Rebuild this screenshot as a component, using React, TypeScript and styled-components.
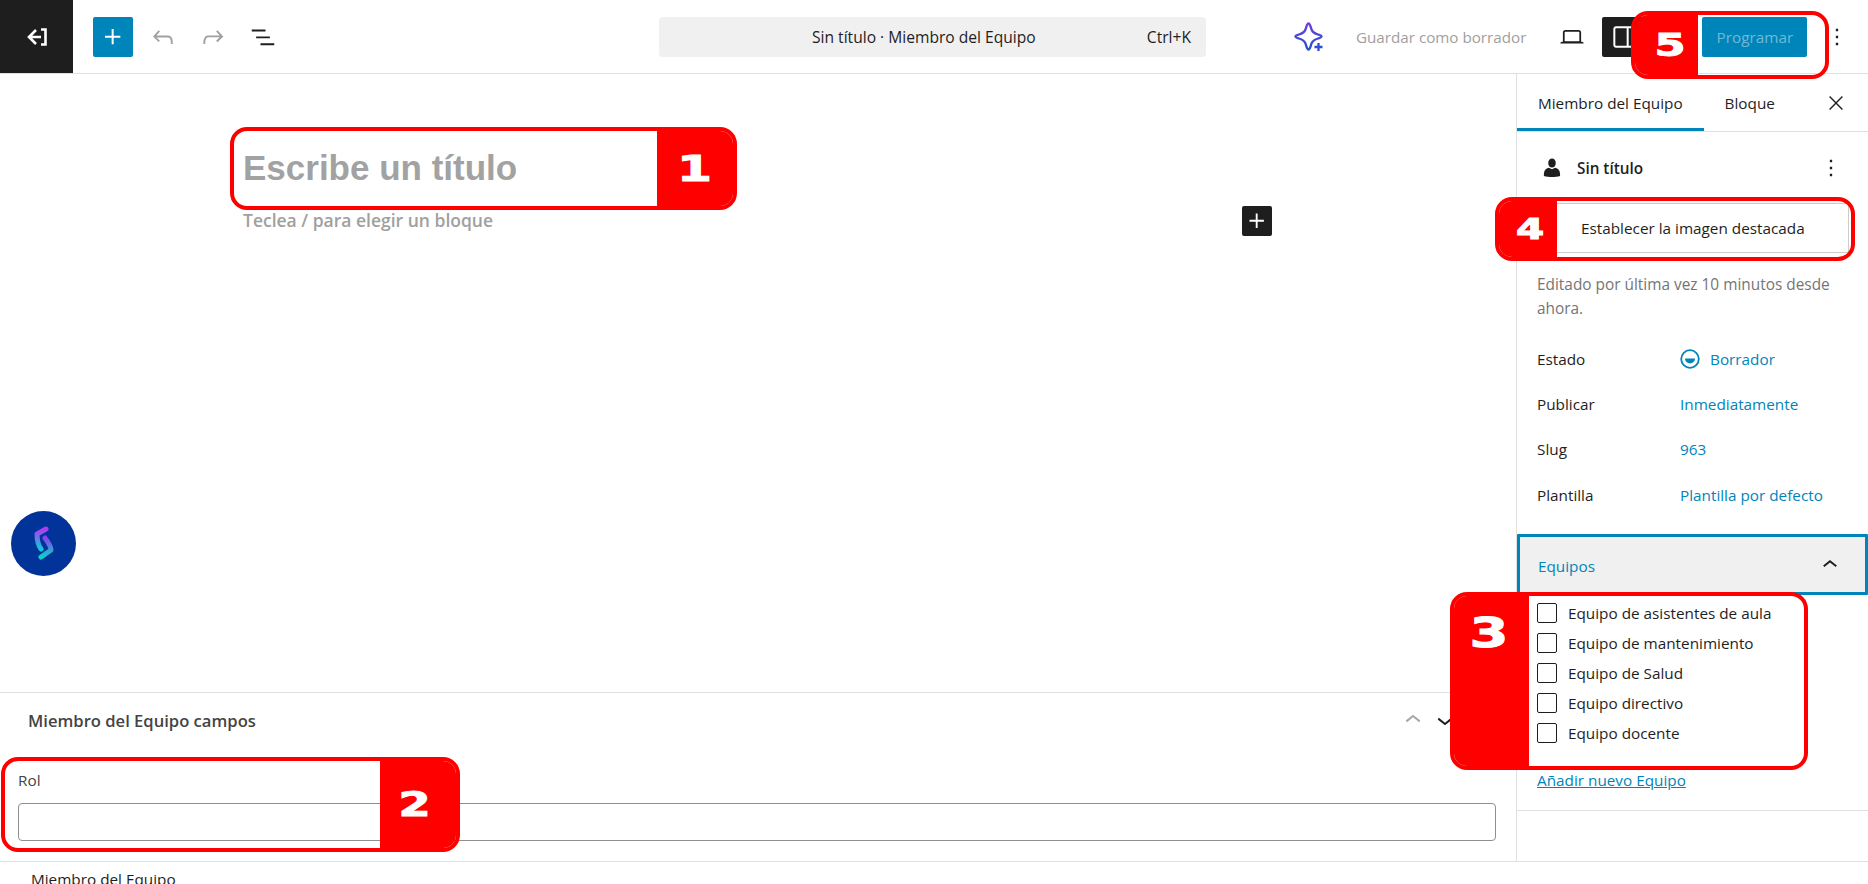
import React from "react";
import styled, { createGlobalStyle } from "styled-components";

const GlobalStyle = createGlobalStyle`
  html, body { margin: 0; padding: 0; background: #fff; overflow: hidden; }
  body { font-family: "Open Sans", "Noto Sans", sans-serif; font-size: 15.3px; color: #1e1e1e; }
  * { box-sizing: border-box; }
`;

const Page = styled.div`
  position: relative;
  width: 1868px;
  height: 884px;
  overflow: hidden;
  display: flex;
  flex-direction: column;
`;

/* top bar */
const Header = styled.header`
  flex: 0 0 74px;
  display: grid;
  grid-template-columns: 659px 547px 1fr;
  align-items: center;
  border-bottom: 1px solid #e0e0e0;
`;

const LeftTools = styled.div`
  display: flex;
  align-items: center;
  height: 73px;
`;

const ExitTile = styled.div`
  width: 73px;
  height: 73px;
  margin-right: 20px;
  background: #1e1e1e;
  display: flex;
  align-items: center;
  justify-content: center;
`;

const InserterButton = styled.div`
  width: 40px;
  height: 40px;
  margin-right: 5px;
  border-radius: 2px;
  background: #0085ba;
  display: flex;
  align-items: center;
  justify-content: center;
`;

const ToolIcon = styled.div`
  width: 50px;
  height: 40px;
  display: flex;
  align-items: center;
  justify-content: center;
`;

const CommandBar = styled.div`
  height: 40px;
  border-radius: 4px;
  background: #f0f0f0;
  display: flex;
  align-items: center;
  justify-content: space-between;
  padding: 0 15px 0 153px;
  font-size: 15.6px;
  color: #1e1e1e;
`;

const RightTools = styled.div`
  display: flex;
  align-items: center;
  height: 73px;
  padding-left: 87px;
`;

const SaveDraft = styled.span`
  margin: 0 32px 0 29px;
  font-size: 15.2px;
  color: #a0a0a0;
  white-space: nowrap;
`;

const SettingsToggle = styled.div`
  width: 44px;
  height: 40px;
  margin-left: 16px;
  border-radius: 2px;
  background: #1e1e1e;
  display: flex;
  align-items: center;
  justify-content: center;
`;

const PublishButton = styled.div`
  width: 105px;
  height: 40px;
  margin-left: 56px;
  border-radius: 2px;
  background: #0085ba;
  color: #6fb9d8;
  font-size: 15.3px;
  display: flex;
  align-items: center;
  justify-content: center;
`;

const MoreButton = styled.div`
  margin-left: 16px;
  display: flex;
`;

/* editor + sidebar */
const Body = styled.div`
  flex: 0 0 787px;
  display: flex;
`;

const EditorColumn = styled.main`
  flex: 1;
  min-width: 0;
  display: flex;
  flex-direction: column;
`;

const Canvas = styled.section`
  flex: 1;
  padding: 74px 244px 0 243px;
`;

const TitlePlaceholder = styled.h1`
  margin: 0;
  font-family: "Liberation Sans", Arial, sans-serif;
  font-size: 35px;
  line-height: 40px;
  font-weight: 700;
  color: #a2a2a2;
`;

const BlockRow = styled.div`
  margin-top: 18px;
  height: 30px;
  display: flex;
  align-items: center;
  justify-content: space-between;
`;

const BlockHint = styled.span`
  margin-top: -2px;
  font-size: 17.5px;
  font-weight: 600;
  color: #a0a0a0;
`;

const BlockInserter = styled.div`
  width: 30px;
  height: 30px;
  border-radius: 2px;
  background: #1e1e1e;
  display: flex;
  align-items: center;
  justify-content: center;
`;

const FloatingBadge = styled.div`
  position: absolute;
  left: 11px;
  top: 511px;
  width: 65px;
  height: 65px;
  border-radius: 50%;
  background: #023399;
`;

const MetaPanel = styled.section`
  flex: 0 0 169px;
  border-top: 1px solid #e0e0e0;
  padding: 0 20px 0 18px;
`;

const MetaHeader = styled.div`
  height: 56px;
  padding: 0 10px 2px 10px;
  display: flex;
  align-items: center;
  justify-content: space-between;
`;

const MetaTitle = styled.h2`
  margin: 0;
  font-size: 16.6px;
  font-weight: 600;
  color: #444;
`;

const MetaArrows = styled.div`
  display: flex;
  gap: 0;
  margin-right: 25px;
`;

const FieldLabel = styled.label`
  display: block;
  margin-top: 21px;
  font-size: 15.3px;
  line-height: 20px;
  color: #444;
`;

const FieldInput = styled.div`
  margin-top: 13px;
  height: 38px;
  border: 1px solid #8c8f94;
  border-radius: 4px;
`;

const Sidebar = styled.aside`
  flex: 0 0 352px;
  border-left: 1px solid #e0e0e0;
`;

const Tabs = styled.div`
  height: 58px;
  border-bottom: 1px solid #e0e0e0;
  display: flex;
  align-items: stretch;
`;

const Tab = styled.div<{ $active?: boolean }>`
  padding: 0 21px;
  display: flex;
  align-items: center;
  font-size: 15.3px;
  color: #1e1e1e;
  box-shadow: ${({ $active }) => ($active ? "inset 0 -3px 0 #0085ba" : "none")};
`;

const TabClose = styled.div`
  margin-left: auto;
  width: 64px;
  display: flex;
  align-items: center;
  justify-content: center;
`;

const PostHeading = styled.div`
  height: 71px;
  padding: 0 23px 0 26px;
  display: flex;
  align-items: center;
  gap: 16px;
`;

const PostName = styled.strong`
  flex: 1;
  font-size: 15.3px;
  font-weight: 600;
`;

const FeaturedButton = styled.div`
  margin: 0 19px 0 20px;
  height: 50px;
  padding-left: 43px;
  border: 1px solid #ccc;
  border-radius: 2px;
  display: flex;
  align-items: center;
  font-size: 15.3px;
  color: #1e1e1e;
`;

const EditedNote = styled.p`
  margin: 20px 20px 0;
  font-size: 15.4px;
  line-height: 24px;
  color: #757575;
`;

const SummaryList = styled.dl`
  margin: 15px 20px 0;
`;

const SummaryRow = styled.div`
  height: 45.33px;
  display: grid;
  grid-template-columns: 143px 1fr;
  align-items: center;
`;

const SummaryKey = styled.dt`
  font-size: 15.3px;
  color: #1e1e1e;
`;

const SummaryValue = styled.dd`
  margin: 0;
  display: flex;
  align-items: center;
  gap: 10px;
  font-size: 15.3px;
  color: #0085ba;
`;

const PanelToggle = styled.div`
  margin: 17px 0 0 0;
  height: 61px;
  padding: 0 20px 0 18px;
  border: 3px solid #0085ba;
  border-radius: 1px;
  background: #f0f0f0;
  display: flex;
  align-items: center;
  justify-content: space-between;
`;

const PanelTitle = styled.span`
  margin-top: 3px;
  font-size: 15.3px;
  font-weight: 500;
  color: #0085ba;
`;

const TermList = styled.div`
  padding: 8px 20px 0;
  height: 216px;
  border-bottom: 1px solid #e0e0e0;
  display: flex;
  flex-direction: column;
  gap: 10px;
`;

const TermRow = styled.div`
  height: 20px;
  display: flex;
  align-items: center;
  gap: 11px;
  font-size: 15.3px;
`;

const CheckBox = styled.span`
  flex: 0 0 20px;
  height: 20px;
  border: 1px solid #1e1e1e;
  border-radius: 2px;
`;

const AddTerm = styled.a`
  margin-top: 17px;
  font-size: 15.3px;
  line-height: 20px;
  color: #0085ba;
  text-decoration: underline;
`;

const Footer = styled.footer`
  flex: 1;
  border-top: 1px solid #e0e0e0;
  padding: 7px 0 0 31px;
  font-size: 15.3px;
  line-height: 20px;
  color: #1e1e1e;
`;

/* red numbered callouts painted over the screenshot */
const Callout = styled.div<{ $x: number; $y: number; $w: number; $h: number; $side: "left" | "right" }>`
  position: absolute;
  left: ${({ $x }) => $x}px;
  top: ${({ $y }) => $y}px;
  width: ${({ $w }) => $w}px;
  height: ${({ $h }) => $h}px;
  display: flex;
  flex-direction: ${({ $side }) => ($side === "left" ? "row" : "row-reverse")};
  border: 4px solid #f00;
  border-radius: 17px;
  overflow: hidden;
  pointer-events: none;
`;

const CalloutTab = styled.div<{ $w: number; $top?: number }>`
  flex: 0 0 ${({ $w }) => $w}px;
  background: #f00;
  display: flex;
  align-items: ${({ $top }) => ($top ? "flex-start" : "center")};
  justify-content: center;
  padding-top: ${({ $top }) => $top || 0}px;
`;

const CalloutDigit = styled.span<{ $size: number; $dx?: number }>`
  display: block;
  font-family: "DejaVu Sans", sans-serif;
  font-weight: 700;
  font-size: ${({ $size }) => $size}px;
  line-height: 1;
  color: #fff;
  -webkit-text-stroke: 1px #fff;
  transform: translateX(${({ $dx }) => $dx || 0}px) scaleX(1.4);
`;

type IconProps = { d: string; size?: number; color?: string };

function WpIcon({ d, size = 28, color = "#1e1e1e" }: IconProps) {
  return (
    <svg width={size} height={size} viewBox="0 0 24 24" fill={color}>
      <path d={d} />
    </svg>
  );
}

const paths = {
  plus: "M11 12.5V17.5H12.5V12.5H17.5V11H12.5V6H11V11H6V12.5H11Z",
  undo: "M18.3 11.7c-.6-.6-1.4-.9-2.3-.9H6.7l2.9-3.3-1.1-1-4.5 5L8.5 16l1-1-2.7-2.7H16c.5 0 .9.2 1.3.5 1 1 1 3.4 1 4.5v.3h1.5v-.2c0-1.5 0-4.3-1.5-5.7z",
  redo: "M15.6 6.5l-1.1 1 2.9 3.3H8c-.9 0-1.7.3-2.3.9-1.4 1.5-1.4 4.2-1.4 5.6v.2h1.5v-.3c0-1.1 0-3.5 1-4.5.3-.3.7-.5 1.3-.5h9.2L14.5 15l1.1 1.1 4.6-4.6-4.6-5z",
  list: "M3 6h11v1.5H3V6zm3.5 5.5h11V13h-11v-1.5zM21 17H10v1.5h11V17z",
  laptop: "M20.5 16h-.7V8c0-1.1-.9-2-2-2H6.2c-1.1 0-2 .9-2 2v8h-.7c-.8 0-1.5.7-1.5 1.5h20c0-.8-.7-1.5-1.5-1.5zM5.7 8c0-.3.2-.5.5-.5h11.6c.3 0 .5.2.5.5v7.6H5.7V8z",
  drawer: "M18 4H6c-1.1 0-2 .9-2 2v12c0 1.1.9 2 2 2h12c1.1 0 2-.9 2-2V6c0-1.1-.9-2-2-2zm-4 14.5H6c-.3 0-.5-.2-.5-.5V6c0-.3.2-.5.5-.5h8v13zm4.5-.5c0 .3-.2.5-.5.5h-2.5v-13H18c.3 0 .5.2.5.5v12z",
  more: "M13 19h-2v-2h2v2zm0-6h-2v-2h2v2zm0-6h-2V5h2v2z",
  close: "m13.06 12 6.47-6.47-1.06-1.06L12 10.94 5.53 4.47 4.47 5.53 10.94 12l-6.47 6.47 1.06 1.06L12 13.06l6.47 6.47 1.06-1.06L13.06 12Z",
  up: "M6.5 12.4L12 8l5.5 4.4-.9 1.2L12 10l-4.5 3.6-1-1.2z",
  down: "M17.5 11.6L12 16l-5.5-4.4.9-1.2L12 14l4.5-3.6 1 1.2z",
};

const ExitIcon = () => (
  <svg width="22" height="20" viewBox="0 0 22 20" fill="none" stroke="#fff" strokeWidth="2.6">
    <path d="M10 3 3 10l7 7M3 10h12" />
    <path d="M15 2.5h4.5v15H15" />
  </svg>
);

const SparkIcon = () => (
  <svg width="34" height="34" viewBox="0 0 34 34" fill="none">
    <defs>
      <linearGradient id="sparkStroke" x1="0" y1="0" x2="0" y2="1">
        <stop offset="0" stopColor="#6a3fd8" />
        <stop offset="1" stopColor="#2450d0" />
      </linearGradient>
    </defs>
    <path
      d="M15.5 3.500c1.500 0 2 3 3 6 1 2.500 3 4 6.500 5 1.500.5 3.500 1 3.500 2s-2 1.500-3.500 2c-3.500 1-5.500 2.500-6.500 5-1 3-1.500 6-3 6s-2-3-3-6c-1-2.500-3-4-6.500-5-1.500-.5-3.500-1-3.500-2s2-1.500 3.500-2c3.500-1 5.500-2.500 6.500-5 1-3 1.500-6 3-6z"
      stroke="url(#sparkStroke)"
      strokeWidth="2.300"
      strokeLinejoin="round"
    />
    <path d="M25.500 23v8M21.500 27h8" stroke="#2f4fd0" strokeWidth="2.300" />
  </svg>
);

const PersonIcon = () => (
  <svg width="18" height="22" viewBox="0 0 20 22" fill="#1e1e1e">
    <ellipse cx="10" cy="5.500" rx="4.200" ry="5" />
    <path d="M1 20c0-5 .5-8 5.500-9.300L10 12.500l3.500-1.800C18.500 12 19 15 19 20c-5 1.400-13 1.400-18 0z" />
  </svg>
);

const DraftIcon = () => (
  <svg width="20" height="20" viewBox="0 0 20 20">
    <circle cx="10" cy="10" r="8.800" fill="none" stroke="#0085ba" strokeWidth="1.800" />
    <path d="M5 9.500h10a5 5 0 0 1-10 0z" fill="#0085ba" />
  </svg>
);

const BadgeLogo = () => (
  <svg width="65" height="65" viewBox="0 0 65 65" fill="none" strokeWidth="5" strokeLinecap="round" strokeLinejoin="round">
    <defs>
      <linearGradient id="badgeA" x1="0" y1="0" x2="0" y2="1">
        <stop offset="0" stopColor="#b03af0" />
        <stop offset="1" stopColor="#10c8dc" />
      </linearGradient>
      <linearGradient id="badgeB" x1="0" y1="0" x2="0" y2="1">
        <stop offset="0" stopColor="#8a40ee" />
        <stop offset="1" stopColor="#0cd0c8" />
      </linearGradient>
    </defs>
    <path d="M35 18 26 23c0 6 1 11 4 15" stroke="url(#badgeA)" />
    <path d="M34 27c3 4 6 8 6 12l-10 7" stroke="url(#badgeB)" />
  </svg>
);

const summary = [
  { key: "Publicar", value: "Inmediatamente" },
  { key: "Slug", value: "963" },
  { key: "Plantilla", value: "Plantilla por defecto" },
];

const terms = [
  "Equipo de asistentes de aula",
  "Equipo de mantenimiento",
  "Equipo de Salud",
  "Equipo directivo",
  "Equipo docente",
];

export default function App() {
  return (
    <Page>
      <GlobalStyle />
      <Header>
        <LeftTools>
          <ExitTile>
            <ExitIcon />
          </ExitTile>
          <InserterButton>
            <WpIcon d={paths.plus} size={32} color="#fff" />
          </InserterButton>
          <ToolIcon>
            <WpIcon d={paths.undo} size={30} color="#a0a0a0" />
          </ToolIcon>
          <ToolIcon>
            <WpIcon d={paths.redo} size={30} color="#a0a0a0" />
          </ToolIcon>
          <ToolIcon>
            <WpIcon d={paths.list} size={30} />
          </ToolIcon>
        </LeftTools>
        <CommandBar>
          <span>Sin título · Miembro del Equipo</span>
          <span>Ctrl+K</span>
        </CommandBar>
        <RightTools>
          <SparkIcon />
          <SaveDraft>Guardar como borrador</SaveDraft>
          <WpIcon d={paths.laptop} />
          <SettingsToggle>
            <WpIcon d={paths.drawer} size={32} color="#fff" />
          </SettingsToggle>
          <PublishButton>Programar</PublishButton>
          <MoreButton>
            <WpIcon d={paths.more} />
          </MoreButton>
        </RightTools>
      </Header>

      <Body>
        <EditorColumn>
          <Canvas>
            <TitlePlaceholder>Escribe un título</TitlePlaceholder>
            <BlockRow>
              <BlockHint>Teclea / para elegir un bloque</BlockHint>
              <BlockInserter>
                <WpIcon d={paths.plus} size={30} color="#fff" />
              </BlockInserter>
            </BlockRow>
          </Canvas>
          <MetaPanel>
            <MetaHeader>
              <MetaTitle>Miembro del Equipo campos</MetaTitle>
              <MetaArrows>
                <WpIcon d={paths.up} size={32} color="#a8a8a8" />
                <WpIcon d={paths.down} size={32} />
              </MetaArrows>
            </MetaHeader>
            <FieldLabel>Rol</FieldLabel>
            <FieldInput />
          </MetaPanel>
        </EditorColumn>

        <Sidebar>
          <Tabs>
            <Tab $active>Miembro del Equipo</Tab>
            <Tab>Bloque</Tab>
            <TabClose>
              <WpIcon d={paths.close} size={22} />
            </TabClose>
          </Tabs>
          <PostHeading>
            <PersonIcon />
            <PostName>Sin título</PostName>
            <WpIcon d={paths.more} />
          </PostHeading>
          <FeaturedButton>Establecer la imagen destacada</FeaturedButton>
          <EditedNote>Editado por última vez 10 minutos desde ahora.</EditedNote>
          <SummaryList>
            <SummaryRow>
              <SummaryKey>Estado</SummaryKey>
              <SummaryValue>
                <DraftIcon />
                Borrador
              </SummaryValue>
            </SummaryRow>
            {summary.map((row) => (
              <SummaryRow key={row.key}>
                <SummaryKey>{row.key}</SummaryKey>
                <SummaryValue>{row.value}</SummaryValue>
              </SummaryRow>
            ))}
          </SummaryList>
          <PanelToggle>
            <PanelTitle>Equipos</PanelTitle>
            <WpIcon d={paths.up} size={30} />
          </PanelToggle>
          <TermList>
            {terms.map((term) => (
              <TermRow key={term}>
                <CheckBox />
                {term}
              </TermRow>
            ))}
            <AddTerm>Añadir nuevo Equipo</AddTerm>
          </TermList>
        </Sidebar>
      </Body>

      <Footer>Miembro del Equipo</Footer>

      <FloatingBadge>
        <BadgeLogo />
      </FloatingBadge>

      <Callout $x={230} $y={127} $w={507} $h={83} $side="right">
        <CalloutTab $w={76}>
          <CalloutDigit $size={36}>1</CalloutDigit>
        </CalloutTab>
      </Callout>
      <Callout $x={1} $y={757} $w={459} $h={95} $side="right">
        <CalloutTab $w={76}>
          <CalloutDigit $size={33} $dx={-4}>2</CalloutDigit>
        </CalloutTab>
      </Callout>
      <Callout $x={1450} $y={592} $w={358} $h={178} $side="left">
        <CalloutTab $w={75} $top={17}>
          <CalloutDigit $size={40} $dx={-3}>3</CalloutDigit>
        </CalloutTab>
      </Callout>
      <Callout $x={1495} $y={197} $w={360} $h={64} $side="left">
        <CalloutTab $w={58}>
          <CalloutDigit $size={29} $dx={2}>4</CalloutDigit>
        </CalloutTab>
      </Callout>
      <Callout $x={1631} $y={11} $w={198} $h={68} $side="left">
        <CalloutTab $w={63}>
          <CalloutDigit $size={32} $dx={4}>5</CalloutDigit>
        </CalloutTab>
      </Callout>
    </Page>
  );
}
